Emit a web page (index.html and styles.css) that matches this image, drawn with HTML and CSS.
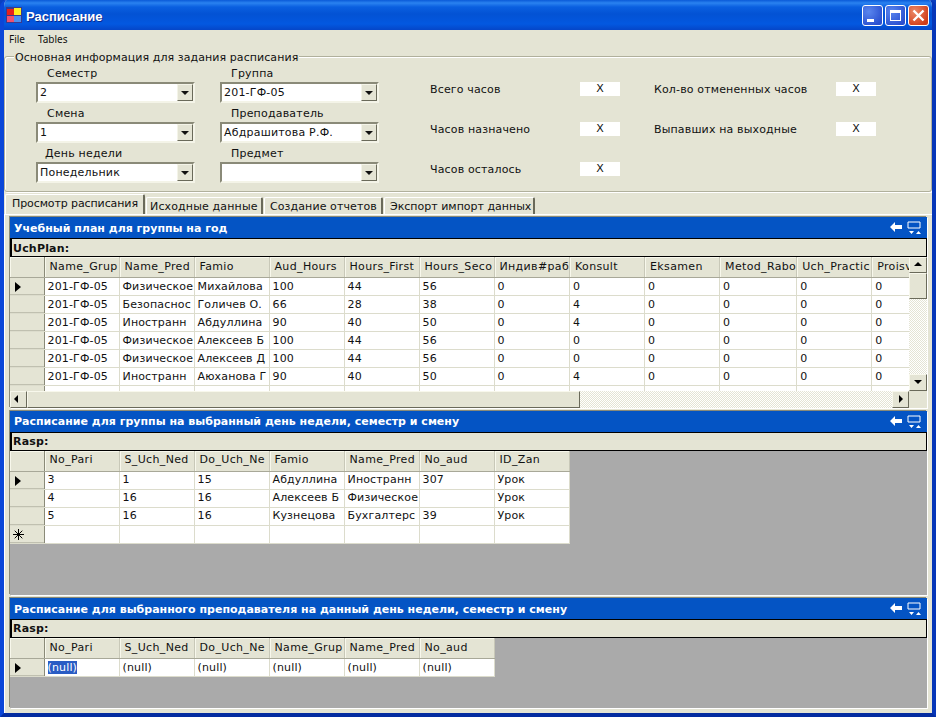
FILE: index.html
```html
<!DOCTYPE html>
<html lang="ru">
<head>
<meta charset="utf-8">
<title>Расписание</title>
<link rel="stylesheet" href="styles.css">
</head>
<body>
<div class="window">
  <div class="titlebar">
    <svg class="appicon" width="16" height="16" viewBox="0 0 16 16"><rect x="0" y="0" width="16" height="16" fill="#3a3a8c"/><rect x="1" y="2" width="7" height="6" fill="#e8201c"/><rect x="8" y="1" width="7" height="7" fill="#ffee20"/><rect x="1" y="9" width="7" height="6" fill="#f05070"/><rect x="8" y="9" width="7" height="6" fill="#4a90f0"/></svg>
    <span class="title">Расписание</span>
    <div class="winbtns">
      <div class="winbtn"><svg width="21" height="21" viewBox="0 0 21 21"><rect x="5" y="14" width="7" height="3" fill="#fff"/></svg></div>
      <div class="winbtn"><svg width="21" height="21" viewBox="0 0 21 21"><path d="M5 5h11v11H5z M6 8v7h9V8z" fill="#fff" fill-rule="evenodd"/></svg></div>
      <div class="winbtn close"><svg width="21" height="21" viewBox="0 0 21 21"><path d="M5.500 5.500l10 10M15.500 5.500l-10 10" stroke="#fff" stroke-width="2.400" fill="none"/></svg></div>
    </div>
  </div>
  <div class="menu"><span>File</span><span>Tables</span></div>
  <div class="group">
    <div class="legend">Основная информация для задания расписания</div>
    <div class="fields">
      <div class="field"><label>Семестр</label><div class="combo"><span>2</span><i class="drop"></i></div></div>
      <div class="field"><label>Группа</label><div class="combo"><span>201-ГФ-05</span><i class="drop"></i></div></div>
      <div class="field"><label>Смена</label><div class="combo"><span>1</span><i class="drop"></i></div></div>
      <div class="field"><label>Преподаватель</label><div class="combo"><span>Абдрашитова Р.Ф.</span><i class="drop"></i></div></div>
      <div class="field"><label class="day">День недели</label><div class="combo"><span>Понедельник</span><i class="drop"></i></div></div>
      <div class="field"><label>Предмет</label><div class="combo"><span></span><i class="drop"></i></div></div>
    </div>
    <div class="stats">
      <div class="stat"><span>Всего часов</span><b>X</b></div>
      <div class="stat"><span>Кол-во отмененных часов</span><b>X</b></div>
      <div class="stat"><span>Часов назначено</span><b>X</b></div>
      <div class="stat"><span>Выпавших на выходные</span><b>X</b></div>
      <div class="stat"><span>Часов осталось</span><b>X</b></div>
    </div>
  </div>
  <div class="tabs">
    <div class="tab active">Просмотр расписания</div>
    <div class="tab t2">Исходные данные</div>
    <div class="tab t3">Создание отчетов</div>
    <div class="tab t4">Экспорт импорт данных</div>
  </div>
  <div class="page">
    <section class="panel p1">
      <div class="caption"><span>Учебный план для группы на год</span><svg width="34" height="14" viewBox="0 0 34 14"><path d="M0 6l5-5v3h7v4H5v3z" fill="#fff"/><path d="M18 1h12v6H18z" fill="none" stroke="#fff"/><path d="M19 10h5l-2.500 3zM26 13h5l-2.500-3z" fill="#fff"/></svg></div>
      <div class="bar">UchPlan:</div>
      <div class="gridwrap">
        <div class="gridarea">
          <div class="clip">
            <table>
              <thead><tr><th class="rh"></th><th>Name_Grup</th><th>Name_Pred</th><th>Famio</th><th>Aud_Hours</th><th>Hours_First</th><th>Hours_Seco</th><th>Индив#раб</th><th>Konsult</th><th>Eksamen</th><th>Metod_Rabo</th><th>Uch_Practic</th><th>Proisv</th></tr></thead>
              <tbody>
                <tr><th class="rh"><i class="cur"></i></th><td>201-ГФ-05</td><td>Физическое</td><td>Михайлова</td><td>100</td><td>44</td><td>56</td><td>0</td><td>0</td><td>0</td><td>0</td><td>0</td><td>0</td></tr>
                <tr><th class="rh"></th><td>201-ГФ-05</td><td>Безопаснос</td><td>Голичев О.</td><td>66</td><td>28</td><td>38</td><td>0</td><td>4</td><td>0</td><td>0</td><td>0</td><td>0</td></tr>
                <tr><th class="rh"></th><td>201-ГФ-05</td><td>Иностранн</td><td>Абдуллина</td><td>90</td><td>40</td><td>50</td><td>0</td><td>4</td><td>0</td><td>0</td><td>0</td><td>0</td></tr>
                <tr><th class="rh"></th><td>201-ГФ-05</td><td>Физическое</td><td>Алексеев Б</td><td>100</td><td>44</td><td>56</td><td>0</td><td>0</td><td>0</td><td>0</td><td>0</td><td>0</td></tr>
                <tr><th class="rh"></th><td>201-ГФ-05</td><td>Физическое</td><td>Алексеев Д</td><td>100</td><td>44</td><td>56</td><td>0</td><td>0</td><td>0</td><td>0</td><td>0</td><td>0</td></tr>
                <tr><th class="rh"></th><td>201-ГФ-05</td><td>Иностранн</td><td>Аюханова Г</td><td>90</td><td>40</td><td>50</td><td>0</td><td>4</td><td>0</td><td>0</td><td>0</td><td>0</td></tr>
                <tr><th class="rh"></th><td></td><td></td><td></td><td></td><td></td><td></td><td></td><td></td><td></td><td></td><td></td><td></td></tr>
              </tbody>
            </table>
          </div>
          <div class="vscroll">
            <div class="sbtn"><i class="up"></i></div>
            <div class="thumb vt"></div>
            <div class="track"></div>
            <div class="sbtn"><i class="down"></i></div>
          </div>
        </div>
        <div class="hscroll">
          <div class="sbtn"><i class="left"></i></div>
          <div class="thumb ht"></div>
          <div class="track"></div>
          <div class="sbtn"><i class="right"></i></div>
        </div>
      </div>
    </section>
    <section class="panel p2">
      <div class="caption"><span>Расписание для группы на выбранный день недели, семестр и смену</span><svg width="34" height="14" viewBox="0 0 34 14"><path d="M0 6l5-5v3h7v4H5v3z" fill="#fff"/><path d="M18 1h12v6H18z" fill="none" stroke="#fff"/><path d="M19 10h5l-2.500 3zM26 13h5l-2.500-3z" fill="#fff"/></svg></div>
      <div class="bar">Rasp:</div>
      <div class="grey">
        <table>
          <thead><tr><th class="rh"></th><th>No_Pari</th><th>S_Uch_Ned</th><th>Do_Uch_Ne</th><th>Famio</th><th>Name_Pred</th><th>No_aud</th><th>ID_Zan</th></tr></thead>
          <tbody>
            <tr><th class="rh"><i class="cur"></i></th><td>3</td><td>1</td><td>15</td><td>Абдуллина</td><td>Иностранн</td><td>307</td><td>Урок</td></tr>
            <tr><th class="rh"></th><td>4</td><td>16</td><td>16</td><td>Алексеев Б</td><td>Физическое</td><td></td><td>Урок</td></tr>
            <tr><th class="rh"></th><td>5</td><td>16</td><td>16</td><td>Кузнецова</td><td>Бухгалтерс</td><td>39</td><td>Урок</td></tr>
            <tr><th class="rh"><svg class="star" width="11" height="11" viewBox="0 0 11 11"><path d="M5.500 0v11M0 5.500h11M1.700 1.700l7.600 7.600M9.300 1.700l-7.600 7.600" stroke="#000" fill="none"/></svg></th><td></td><td></td><td></td><td></td><td></td><td></td><td></td></tr>
          </tbody>
        </table>
      </div>
    </section>
    <section class="panel p3">
      <div class="caption"><span>Расписание для выбранного преподавателя на данный день недели, семестр и смену</span><svg width="34" height="14" viewBox="0 0 34 14"><path d="M0 6l5-5v3h7v4H5v3z" fill="#fff"/><path d="M18 1h12v6H18z" fill="none" stroke="#fff"/><path d="M19 10h5l-2.500 3zM26 13h5l-2.500-3z" fill="#fff"/></svg></div>
      <div class="bar">Rasp:</div>
      <div class="grey">
        <table>
          <thead><tr><th class="rh"></th><th>No_Pari</th><th>S_Uch_Ned</th><th>Do_Uch_Ne</th><th>Name_Grup</th><th>Name_Pred</th><th>No_aud</th></tr></thead>
          <tbody>
            <tr><th class="rh"><i class="cur"></i></th><td><mark>(null)</mark></td><td>(null)</td><td>(null)</td><td>(null)</td><td>(null)</td><td>(null)</td></tr>
          </tbody>
        </table>
      </div>
    </section>
  </div>
</div>
</body>
</html>
```
FILE: styles.css
```css
* { box-sizing: border-box; }
html, body { margin: 0; padding: 0; }
body { width: 936px; height: 717px; overflow: hidden; background: #0a3fc0; font: 11px "DejaVu Sans", sans-serif; color: #111; }
.window { width: 936px; height: 717px; display: flex; flex-direction: column; background: #e4e4d4; border: solid #0a46d8; border-width: 0 4px 4px; border-color: #0a3cc8 #0636b8 #042ca0 #0a46d8; border-radius: 7px 7px 0 0; overflow: hidden; }

.titlebar { flex: none; height: 30px; margin: 0 -4px; padding: 3px 7px 0 6px; display: flex; align-items: center; background: linear-gradient(#0a5ad8 0, #2a82f0 3px, #0a5fe0 7px, #0352d4 14px, #0358e0 24px, #0546c8 30px); }
.appicon { flex: none; margin-top: -3px; }
.title { margin-left: 4px; font: bold 13px "Liberation Sans", sans-serif; color: #fff; text-shadow: 1px 1px #0a2a90; }
.winbtns { margin-left: auto; display: flex; gap: 2px; margin-top: -3px; }
.winbtn { width: 21px; height: 21px; border: 1px solid #fff; border-radius: 3px; background: radial-gradient(circle at 30% 30%, #5a86ee, #2a50d0 80%); margin-top: 1px; }
.winbtn svg { display: block; margin: -1px; }
.winbtn.close { background: radial-gradient(circle at 30% 30%, #ec8a68, #d03c18 80%); }

.menu { flex: none; height: 19px; display: flex; gap: 13px; padding: 2px 0 0 5px; font: 10px "Noto Sans", sans-serif; line-height: 14px; }

.group { flex: none; height: 136px; margin: 7px 0 0 0; border: 1px solid #b0b09c; box-shadow: inset 1px 1px #fff, 1px 1px #fff; border-radius: 3px; position: relative; display: flex; padding-top: 10px; }
.legend { position: absolute; left: 9px; top: -6px; background: #e4e4d4; padding: 0 1px; line-height: 13px; white-space: nowrap; letter-spacing: 0.07px; }
.fields { width: 418px; padding-left: 31px; display: grid; grid-template-columns: 159px 159px; column-gap: 25px; grid-auto-rows: 40px; align-content: start; }
.field label { display: block; height: 15px; line-height: 13px; padding-left: 11px; letter-spacing: 0.2px; }
.field label.day { padding-left: 9px; }
.combo { width: 159px; height: 21px; background: #fff; border: 2px solid; border-color: #8a8a78 #f4f4e8 #f4f4e8 #8a8a78; display: flex; align-items: center; justify-content: space-between; padding-left: 2px; line-height: 17px; letter-spacing: 0.2px; }
.drop { width: 16px; height: 17px; background: #e4e4d4; border: 1px solid; border-color: #f4f4e8 #6a6a5a #6a6a5a #f4f4e8; position: relative; }
.drop::after { content: ""; position: absolute; left: 3px; top: 6px; border: 4px solid transparent; border-top: 4px solid #111; border-bottom: 0; }

.stats { flex: 1; display: grid; grid-template-columns: 224px 1fr; grid-auto-rows: 40px; align-content: start; padding-top: 15px; padding-left: 7px; }
.stat { display: flex; align-items: flex-start; }
.stat span { width: 150px; line-height: 15px; letter-spacing: 0.15px; white-space: nowrap; }
.stat:nth-child(even) span { width: 182px; }
.stat b { width: 40px; height: 14px; background: #fff; text-align: center; font-weight: 400; line-height: 14px; }

.tabs { flex: none; height: 22px; display: flex; align-items: flex-end; padding-left: 1px; gap: 1px; }
.tab { height: 17px; background: #e4e4d4; border: 1px solid #fff; border-right: 2px solid #6a6a5a; border-bottom: 0; border-radius: 2px 2px 0 0; line-height: 17px; padding: 0 0 0 5px; white-space: nowrap; overflow: hidden; }
.tab.active { height: 20px; width: 140px; padding: 0 0 0 6px; line-height: 18px; letter-spacing: -0.1px; border-bottom: 0; position: relative; z-index: 1; }
.t2 { width: 117px; padding-left: 3px; letter-spacing: 0.15px; } .t3 { width: 119px; letter-spacing: 0.1px; } .t4 { width: 151px; }

.page { flex: 1; min-height: 0; display: flex; flex-direction: column; gap: 3px; padding: 2px 6px 0 5px; border-top: 1px solid #fff; border-left: 1px solid #fff; margin-right: -1px; }
.panel { flex: none; display: flex; flex-direction: column; background: #e4e4d4; box-shadow: -1px -1px #8a8a78, 1px 1px #fff; }
.p1 { height: 191px; } .p2 { height: 184px; } .p3 { height: 110px; }
.caption { flex: none; height: 21px; background: #0454c4; display: flex; align-items: center; justify-content: space-between; padding: 0 3px 0 4px; color: #fff; font-weight: 700; line-height: 21px; white-space: nowrap; }
.caption svg { flex: none; display: block; }
.p1 .caption span, .p3 .caption span { padding-top: 2px; }
.bar { flex: none; height: 19px; background: #e4e4d4; border: 1px solid #000; border-left-width: 2px; font-weight: 700; line-height: 17px; padding-left: 1px; letter-spacing: 0.2px; }
.p1 .bar { line-height: 19px; }

table { border-collapse: collapse; table-layout: fixed; width: max-content; }
th, td { width: 75px; height: 18px; padding: 1px 0 1px 3px; text-align: left; font-weight: 400; overflow: hidden; white-space: nowrap; line-height: 15px; letter-spacing: 0.15px; border: 1px solid #dcdccc; border-width: 0 1px 1px 0; }
td { background: #fff; }
.p2 td { padding-top: 0; padding-bottom: 2px; }
thead th { height: 20px; padding: 0 0 2px 5px; background: #e4e4d4; border-right: 1px solid #c8c8b8; border-bottom: 1px solid #a8a898; box-shadow: inset 1px 1px #f8f8ec; letter-spacing: 0.35px; }
.p1 thead th, .p3 thead th { padding-bottom: 0; }
th.rh { width: 34px; background: #e4e4d4; border-right: 1px solid #8a8a78; position: relative; }
tbody th.rh { box-shadow: inset 0 -1px #c0c0b0; }
.cur { position: absolute; left: 5px; top: 4px; border: 5px solid transparent; border-left: 6px solid #000; border-right: 0; }
.star { position: absolute; left: 3px; top: 3px; }
mark { background: #2a5cc4; color: #fff; }

.gridwrap { flex: 1; min-height: 0; display: flex; flex-direction: column; }
.gridarea { flex: 1; min-height: 0; display: flex; }
.clip { flex: 1; min-width: 0; overflow: hidden; background: #aaa; }
.vscroll { flex: none; width: 18px; display: flex; flex-direction: column; }
.hscroll { flex: none; height: 17px; display: flex; padding-right: 18px; }
.sbtn { flex: none; width: 17px; height: 17px; background: #e4e4d4; border: 1px solid; border-color: #f8f8ec #6a6a5a #6a6a5a #f8f8ec; position: relative; }
.vscroll .sbtn { width: 18px; }
.vscroll .sbtn:first-child { height: 16px; }
.thumb { flex: none; background: #e4e4d4; border: 1px solid; border-color: #f8f8ec #6a6a5a #6a6a5a #f8f8ec; }
.vt { height: 26px; } .ht { width: 553px; }
.track { flex: 1; background-image: conic-gradient(#fff 25%, #e4e4d4 0 50%, #fff 0 75%, #e4e4d4 0); background-size: 2px 2px; }
.sbtn i { position: absolute; width: 0; height: 0; border: 4px solid transparent; }
.up { left: 4px; top: 1px; border-bottom-color: #000 !important; border-top-width: 0 !important; margin-top: 3px; }
.down { left: 4px; top: 5px; border-top-color: #000 !important; border-bottom-width: 0 !important; }
.left { left: 3px; top: 3px; border-right-color: #000 !important; border-left-width: 0 !important; }
.right { left: 6px; top: 3px; border-left-color: #000 !important; border-right-width: 0 !important; }

.grey { flex: 1; min-height: 0; background: #aaa; overflow: hidden; }
```
